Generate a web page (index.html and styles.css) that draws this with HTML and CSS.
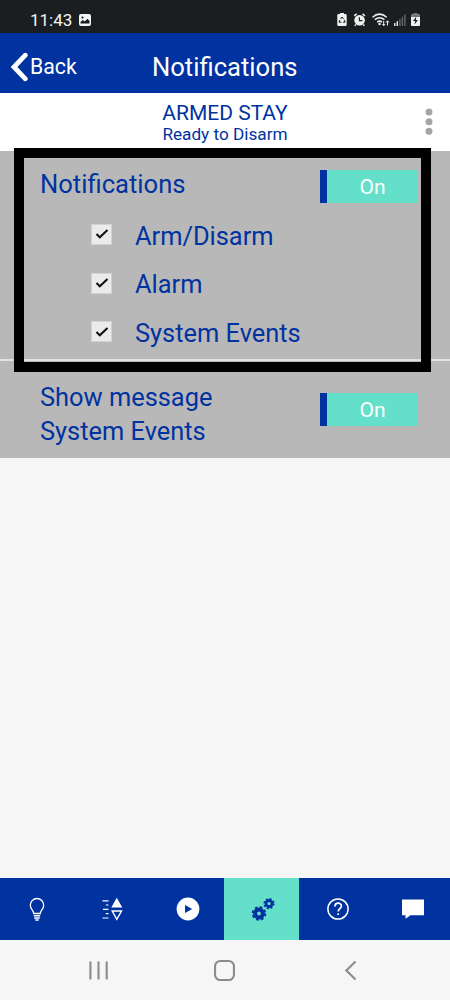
FILE: index.html
```html
<!DOCTYPE html>
<html lang="en">
<head>
<meta charset="utf-8">
<title>Notifications</title>
<link rel="stylesheet" href="styles.css">
</head>
<body>
<div class="phone">
  <div class="statusbar">
    <span class="clock">11:43</span>
    <svg class="picture" viewBox="0 0 12 12"><rect width="12" height="12" rx="2" fill="#f4f4f4"/><circle cx="3.5" cy="3.6" r="1.1" fill="#1a1e20"/><path d="M1.500 9.500V8l2.300-2 2 1.500L8.500 4.800l2 2.200v2.500z" fill="#1a1e20"/></svg>
    <svg class="signals" viewBox="0 0 84 14">
      <path d="M3 0h4v1h1.500q1.200 0 1.200 1.200v9.600q0 1.200-1.200 1.200h-7Q.3 13 .3 11.800V2.200Q.3 1 1.500 1H3z" fill="#f0f0f0"/>
      <path d="M3.500 6L5 4l1.500 2M7.300 7l.8 2.200H6M4.500 9.200H2L2.800 7" fill="none" stroke="#222" stroke-width="1"/>
      <circle cx="22.600" cy="7.300" r="5.300" fill="#f0f0f0"/><path d="M17.300 2.900l2.300-2M27.900 2.900l-2.300-2M19 11.500l-1.200 1.300M26.200 11.500l1.200 1.300" stroke="#f0f0f0" stroke-width="1.500"/>
      <path d="M22.400 4.200v3.400h3" fill="none" stroke="#222" stroke-width="1.200"/>
      <path d="M35.500 4.200Q42.500-2 49.700 4.200M37.800 6.700q4.800-4 9.600 0M40.200 9.100q2.500-2 4.800 0" fill="none" stroke="#f0f0f0" stroke-width="1.500"/><circle cx="42.600" cy="11" r="1.200" fill="#f0f0f0"/>
      <path d="M46.700 8v4.500M45.200 11l1.500 1.700 1.500-1.700M50.500 12.500V8M49 9.500l1.500-1.700L52 9.500" fill="none" stroke="#f0f0f0" stroke-width="1"/>
      <path d="M57.800 10v3M60.300 8.300V13" stroke="#eee" stroke-width="1.400"/><path d="M62.900 6v7M65.400 3.700V13M67.900 1.500V13" stroke="#666" stroke-width="1.400"/>
      <path d="M76.500 0h4v1h1.500q1 0 1 1v3h-9V2q0-1 1-1h1.500z" fill="#777"/><path d="M74 4h9v8q0 1-1 1h-7q-1 0-1-1z" fill="#f0f0f0"/><path d="M79.300 3.500L76 8h2.200l-.7 3.500L81 7h-2.200z" fill="#222"/>
    </svg>
  </div>
  <header class="header">
    <svg class="chevron" viewBox="0 0 18 30"><path d="M15.300 3.200L4 15l11.300 11.800" fill="none" stroke="#fff" stroke-width="4.800" stroke-linecap="round"/></svg>
    <span class="back">Back</span>
    <h1 class="title">Notifications</h1>
  </header>
  <section class="armed">
    <div class="armed-state">ARMED STAY</div>
    <div class="armed-sub">Ready to Disarm</div>
    <svg class="more" viewBox="0 0 8 28"><g fill="#a5a5a5"><circle cx="4" cy="4" r="3.500"/><circle cx="4" cy="13.700" r="3.500"/><circle cx="4" cy="23.300" r="3.500"/></g></svg>
  </section>
  <main class="settings">
    <section class="group">
      <div class="group-head"><span class="label">Notifications</span><span class="toggle">On</span></div>
      <div class="option"><span class="check"><svg viewBox="0 0 14 12"><path d="M1.500 6l3.300 3.300L12.500 2"/></svg></span><span class="label">Arm/Disarm</span></div>
      <div class="option"><span class="check"><svg viewBox="0 0 14 12"><path d="M1.500 6l3.300 3.300L12.500 2"/></svg></span><span class="label">Alarm</span></div>
      <div class="option"><span class="check"><svg viewBox="0 0 14 12"><path d="M1.500 6l3.300 3.300L12.500 2"/></svg></span><span class="label">System Events</span></div>
    </section>
    <section class="message">
      <span class="label">Show message<br>System Events</span><span class="toggle">On</span>
    </section>
    <div class="highlight"></div>
  </main>
  <nav class="tabs">
    <div class="tab"><svg viewBox="0 0 24 24"><path d="M8.700 16.500c0-3-3.400-4.500-3.400-8.300a6.700 6.700 0 0 1 13.400 0c0 3.800-3.400 5.300-3.400 8.300z" fill="none" stroke="#fff" stroke-width="1.300"/><path d="M8.800 18.800h6.400M9.200 21h5.600M10.300 23h3.400" stroke="#fff" stroke-width="1.400"/></svg></div>
    <div class="tab"><svg viewBox="0 0 24 24"><path d="M1.500 3.800h6M4.800 8h2.700M2 12.400h5.500M4.800 16.600h2.700M1.500 21h6" stroke="#fff" stroke-width="1.200"/><path d="M10.300 10.500L15.800.8l5.500 9.700z" fill="#fff"/><path d="M11.200 14h9.300l-4.700 8.300z" fill="none" stroke="#fff" stroke-width="1.400"/></svg></div>
    <div class="tab"><svg viewBox="0 0 24 24"><circle cx="12" cy="12" r="11.400" fill="#fff"/><path d="M9 7.900l7.200 4.100L9 16.100z" fill="#0033a0"/></svg></div>
    <div class="tab active"><svg viewBox="0 0 24 24"><g fill="none" stroke="#0033a0"><circle cx="8" cy="16.500" r="3.900" stroke-width="4"/><circle cx="8" cy="16.500" r="6.300" stroke-width="2" stroke-dasharray="2.700 2.248"/><circle cx="18" cy="6.600" r="3.100" stroke-width="2.800"/><circle cx="18" cy="6.600" r="4.800" stroke-width="1.600" stroke-dasharray="2 1.770"/></g></svg></div>
    <div class="tab"><svg viewBox="0 0 24 24"><circle cx="12" cy="12" r="10.100" fill="none" stroke="#fff" stroke-width="1.500"/><path d="M8.900 9.600c0-4.600 6.500-4.300 6.500-.5 0 2.600-3.200 2.600-3.200 5.500M12.200 16.200v1.700" fill="none" stroke="#fff" stroke-width="1.700"/></svg></div>
    <div class="tab"><svg viewBox="0 0 24 24"><path d="M1.500 2.600h21q.5 0 .5.500v14.600q0 .5-.5.500H9.500l-5 3.600v-3.600h-3q-.5 0-.5-.5V3.100q0-.5.500-.5z" fill="#fff"/></svg></div>
  </nav>
  <div class="softkeys">
    <svg viewBox="0 0 20 20"><path d="M2.300 1.500v17M10 1.500v17M17.800 1.500v17"/></svg>
    <svg viewBox="0 0 20 20"><rect x="1" y="1" width="18" height="18" rx="5"/></svg>
    <svg viewBox="0 0 20 20"><path d="M14.800 1.500L6 10l8.800 8.500"/></svg>
  </div>
</div>
</body>
</html>
```
FILE: styles.css
```css
* { box-sizing: border-box; }
body { margin: 0; font-family: Roboto, "Liberation Sans", sans-serif; }
.phone { width: 450px; height: 1000px; display: flex; flex-direction: column; background: #f6f6f6; overflow: hidden; }
.statusbar { height: 32.500px; background: #1a1e20; display: flex; align-items: center; padding: 7px 29px 0 30px; color: #f4f4f4; }
.clock { font-size: 17px; line-height: 20px; width: 49px; }
.picture { width: 12px; height: 12px; }
.signals { width: 84px; height: 14px; margin-left: auto; }
.header { height: 60.500px; background: #0033a0; color: #fff; display: flex; align-items: center; padding: 8px 0 0 10px; }
.chevron { width: 18px; height: 30px; flex: none; margin-right: 2px; }
.back { font-size: 21.300px; line-height: 28px; width: 122px; padding-top: 1px; }
.title { margin: 1px 0 0; font-size: 25.600px; font-weight: 400; line-height: 30px; }
.armed { height: 58px; background: #fff; color: #0033a0; text-align: center; position: relative; padding-top: 8px; }
.armed-state { font-size: 21px; line-height: 24px; }
.armed-sub { font-size: 17.200px; line-height: 19px; }
.more { position: absolute; width: 8px; height: 28px; right: 17px; top: 15px; }
.settings { position: relative; height: 307px; background: #b8b8b8; color: #0033a0; }
.group { height: 210px; padding-top: 9px; border-bottom: 2px solid #e0e0e0; }
.group-head { height: 51.500px; display: flex; justify-content: space-between; align-items: flex-start; padding: 0 32px 0 40px; }
.group-head .toggle { margin-top: 9.500px; }
.label { font-size: 25.400px; line-height: 34.400px; white-space: nowrap; }
.group-head .label { margin-top: 6.500px; font-size: 25.600px; }
.option { height: 48.700px; display: flex; align-items: center; padding-left: 91px; }
.check { width: 21px; height: 21px; background: #ebebeb; border: 1px solid #d2d2d2; margin: -3px 23px 0 0; display: flex; align-items: center; justify-content: center; }
.check svg { width: 14px; height: 12px; fill: none; stroke: #111; stroke-width: 2; }
.toggle { width: 98px; height: 33px; background: #64e0ca; border-left: 7px solid #0033a0; color: #fff; font-size: 21px; line-height: 35px; text-align: center; flex: none; }
.message { height: 97px; display: flex; justify-content: space-between; align-items: flex-start; padding: 19px 32px 0 40px; }
.message .toggle { margin-top: 13px; }
.highlight { position: absolute; left: 14px; top: -3px; width: 417px; height: 224px; border: 10px solid #000; }
.tabs { margin-top: auto; height: 62px; background: #0033a0; display: grid; grid-template-columns: 74px 75px 75px 75px 75px 76px; }
.tab { display: flex; align-items: center; justify-content: center; }
.tab svg { width: 24px; height: 24px; }
.tab + .tab svg { margin-left: 2px; }
.active { background: #64e0ca; }
.softkeys { height: 60px; display: flex; justify-content: space-between; align-items: center; padding: 0 89px 0 88px; }
.softkeys svg { width: 21px; height: 21px; fill: none; stroke: #8c8c8c; stroke-width: 2; }
```
